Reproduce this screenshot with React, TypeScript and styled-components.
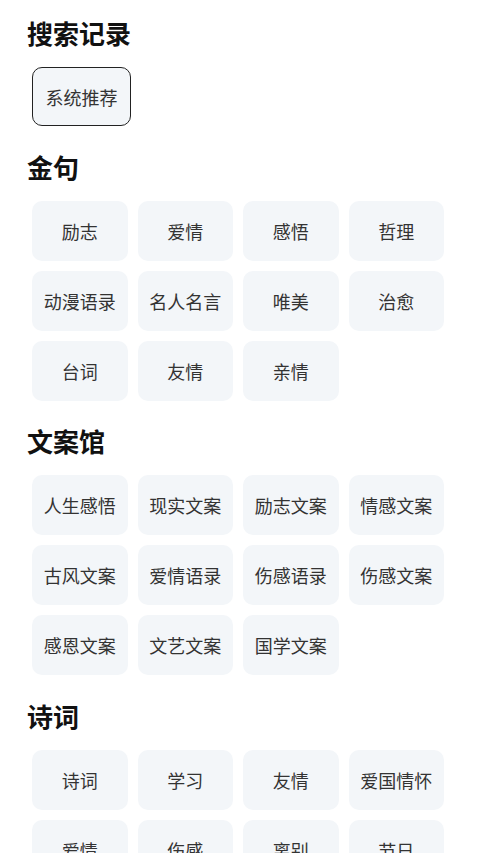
import styled, { createGlobalStyle } from 'styled-components';

const GlobalStyle = createGlobalStyle`
  html, body {
    margin: 0;
    padding: 0;
    background: #ffffff;
  }
  body {
    font-family: 'Noto Sans CJK SC', 'Noto Sans', sans-serif;
    color: #111;
  }
`;

const sections = [
  {
    title: '金句',
    tags: ['励志', '爱情', '感悟', '哲理', '动漫语录', '名人名言', '唯美', '治愈', '台词', '友情', '亲情'],
  },
  {
    title: '文案馆',
    tags: [
      '人生感悟',
      '现实文案',
      '励志文案',
      '情感文案',
      '古风文案',
      '爱情语录',
      '伤感语录',
      '伤感文案',
      '感恩文案',
      '文艺文案',
      '国学文案',
    ],
  },
  {
    title: '诗词',
    tags: ['诗词', '学习', '友情', '爱国情怀', '爱情', '伤感', '离别', '节日'],
  },
];

const App = () => {
  return (
    <>
      <GlobalStyle />
      <Page>
        <Section>
          <Heading>{'搜索记录'}</Heading>
          <HistoryRow>
            <HistoryTag type="button">{'系统推荐'}</HistoryTag>
          </HistoryRow>
        </Section>

        {sections.map((section) => (
          <Section key={section.title}>
            <Heading>{section.title}</Heading>
            <TagGrid>
              {section.tags.map((tag, index) => (
                <Tag key={`${section.title}-${tag}-${index}`} type="button">
                  {tag}
                </Tag>
              ))}
            </TagGrid>
          </Section>
        ))}
      </Page>
    </>
  );
};

const Page = styled.div`
  display: flex;
  flex-direction: column;
  gap: 22.5px;
  padding: 15px 0 40px 27px;
  width: 480px;
  box-sizing: border-box;
  height: 853px;
  overflow: hidden;
`;

const Section = styled.div`
  display: flex;
  flex-direction: column;
  gap: 16px;
`;

const Heading = styled.div`
  font-size: 26px;
  line-height: 36px;
  font-weight: 600;
  color: #111;
`;

const HistoryRow = styled.div`
  display: flex;
  gap: 10px;
  padding-left: 5px;
`;

const HistoryTag = styled.button`
  height: 59px;
  padding: 0 12.5px;
  border: 1.5px solid #222;
  border-radius: 10px;
  background: #f3f6f9;
  font-family: inherit;
  font-size: 18px;
  color: #333;
  cursor: pointer;
`;

const TagGrid = styled.div`
  display: grid;
  grid-template-columns: repeat(4, 95.5px);
  column-gap: 10px;
  row-gap: 10px;
  padding-left: 5px;
`;

const Tag = styled.button`
  height: 60px;
  border: none;
  border-radius: 10px;
  background: #f3f6f9;
  font-family: inherit;
  font-size: 18px;
  color: #333;
  cursor: pointer;
  padding: 0;
`;

export default App;
